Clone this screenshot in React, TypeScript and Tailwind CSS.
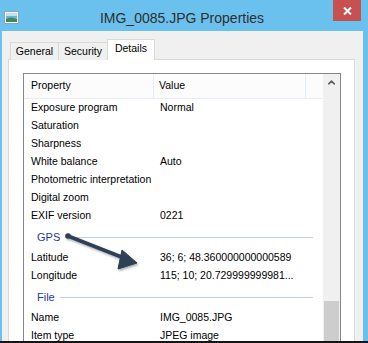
import { ChevronUp } from "lucide-react";

const font = { fontFamily: '"Liberation Sans", Arial, sans-serif' };

type Row = { name: string; value?: string };

const camera: Row[] = [
  { name: "Exposure program", value: "Normal" },
  { name: "Saturation" },
  { name: "Sharpness" },
  { name: "White balance", value: "Auto" },
  { name: "Photometric interpretation" },
  { name: "Digital zoom" },
  { name: "EXIF version", value: "0221" },
];

const gps: Row[] = [
  { name: "Latitude", value: "36; 6; 48.360000000000589" },
  { name: "Longitude", value: "115; 10; 20.729999999981..." },
];

const file: Row[] = [
  { name: "Name", value: "IMG_0085.JPG" },
  { name: "Item type", value: "JPEG image" },
];

function PropRow({ row }: { row: Row }) {
  return (
    <div className="flex h-[18px] items-center text-[10.5px] text-black">
      <div className="w-[130px] shrink-0 pl-[7px] whitespace-nowrap">{row.name}</div>
      <div className="pl-[6px] whitespace-nowrap">{row.value}</div>
    </div>
  );
}

function Group({ title }: { title: string }) {
  return (
    <div className="flex h-[24px] items-center pl-[13px] pr-[10px]">
      <span className="text-[11px] text-[#1e3a9a]">{title}</span>
      <div className="ml-[5px] h-px flex-1 bg-[#c3cfe2]" />
    </div>
  );
}

function PictureIcon() {
  return (
    <svg width="15" height="13" viewBox="0 0 15 13">
      <rect x="0.5" y="0.5" width="14" height="12" fill="#f4f8fb" stroke="#8fa4b4" />
      <rect x="2" y="2" width="11" height="9" fill="#6fb2dc" />
      <path d="M2 8 Q6 5 13 8 L13 11 L2 11 Z" fill="#3f8a5a" />
      <rect x="2" y="2" width="11" height="3" fill="#bfe0f3" />
    </svg>
  );
}

export default function App() {
  return (
    <div className="relative flex h-[343px] w-[368px] flex-col overflow-hidden bg-[#6bc1ed]" style={font}>
      <div className="flex h-[31px] shrink-0">
        <div className="ml-[4px] mt-[11px]">
          <PictureIcon />
        </div>
        <div className="flex-1 pl-[12px] pt-[8px] text-center text-[14px] text-[#2e2e2e]">
          IMG_0085.JPG Properties
        </div>
        <div className="mr-[7px] flex h-[21px] w-[28px] items-center justify-center bg-[#c75050]">
          <svg width="9" height="8" viewBox="0 0 9 8">
            <path d="M1 0.5 L8 7.5 M8 0.5 L1 7.5" stroke="#fff" strokeWidth="2" />
          </svg>
        </div>
      </div>

      <div className="ml-[2px] flex min-h-0 w-[361px] flex-1 flex-col bg-[#f0f0f0] pt-[8px]">
        <div className="relative z-10 -mb-px flex h-[21px] items-end pl-[8px] text-[10.5px] text-black">
          <div className="flex h-[18px] w-[49px] items-center justify-center border border-b-0 border-[#d9d9d9] bg-[#f0f0f0] pt-[1px]">
            General
          </div>
          <div className="-ml-px flex h-[18px] w-[50px] items-center justify-center border border-b-0 border-[#d9d9d9] bg-[#f0f0f0] pt-[1px]">
            Security
          </div>
          <div className="-ml-px flex h-[21px] w-[48px] items-center justify-center border border-b-0 border-[#d9d9d9] bg-white pb-[2px]">
            Details
          </div>
        </div>

        <div className="ml-[6px] flex min-h-0 w-[347px] flex-1 flex-col border border-b-0 border-[#d9d9d9] bg-white pl-[14px] pt-[13px]">
          <div className="flex min-h-0 w-[318px] flex-1 border border-b-0 border-[#828790]">
            <div className="flex-1 overflow-hidden">
              <div className="flex h-[25px] items-center border-b border-[#e5ecf5] bg-[#fcfcfc] text-[10.5px] text-black">
                <div className="flex h-full w-[130px] shrink-0 items-center border-r border-[#e3ebf6] pl-[7px]">
                  Property
                </div>
                <div className="flex h-full w-[152px] shrink-0 items-center border-r border-[#e3ebf6] pl-[5px]">
                  Value
                </div>
              </div>
              {camera.map((r) => (
                <PropRow key={r.name} row={r} />
              ))}
              <Group title="GPS" />
              {gps.map((r) => (
                <PropRow key={r.name} row={r} />
              ))}
              <Group title="File" />
              {file.map((r) => (
                <PropRow key={r.name} row={r} />
              ))}
            </div>
            <div className="flex w-[17px] shrink-0 flex-col bg-[#f0f0f0]">
              <div className="flex h-[17px] items-center justify-center">
                <ChevronUp size={11} strokeWidth={3.5} className="text-[#606060]" />
              </div>
              <div className="h-[210px]" />
              <div className="mx-px flex-1 bg-[#cdcdcd]" />
            </div>
          </div>
        </div>
      </div>

      <div className="h-[2px] shrink-0 bg-[#151515]" />

      <svg className="pointer-events-none absolute left-0 top-0" width="368" height="343" viewBox="0 0 368 343">
        <defs>
          <filter id="sh" x="-20%" y="-20%" width="140%" height="140%">
            <feDropShadow dx="1" dy="1.5" stdDeviation="1.2" floodColor="#000" floodOpacity="0.35" />
          </filter>
        </defs>
        <g filter="url(#sh)" fill="#2e3f54" stroke="#2e3f54">
          <circle cx="68" cy="236" r="2.8" stroke="none" />
          <path d="M68 236 L124 258" strokeWidth="3.6" strokeLinecap="round" fill="none" />
          <path d="M122 250 L137 263 L118 269 Z" strokeWidth="1" strokeLinejoin="round" />
        </g>
      </svg>
    </div>
  );
}
